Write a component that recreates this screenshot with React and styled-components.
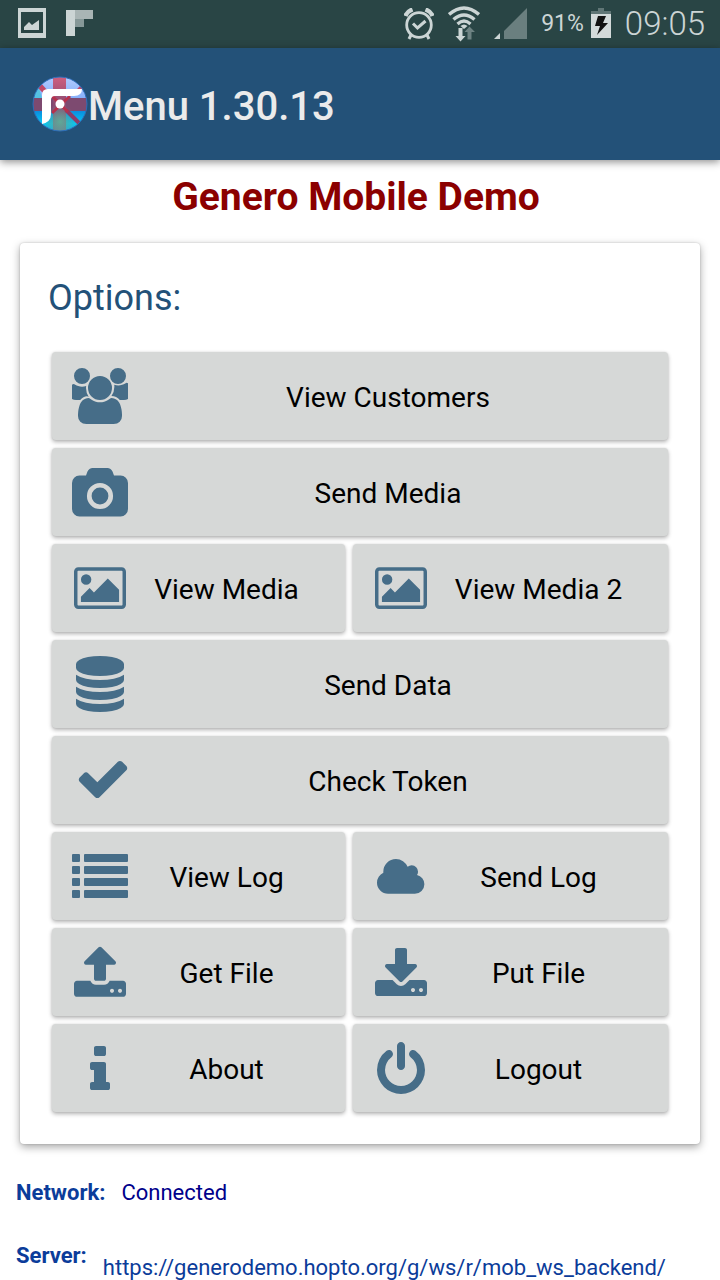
import React from "react";
import styled, { createGlobalStyle } from "styled-components";

const GlobalStyle = createGlobalStyle`
  *, *::before, *::after { box-sizing: border-box; }
  body {
    margin: 0;
    background: #fff;
    font-family: Roboto, "Liberation Sans", sans-serif;
  }
`;

const Screen = styled.div`
  display: flex;
  flex-direction: column;
`;

const StatusBar = styled.div`
  display: flex;
  align-items: center;
  justify-content: space-between;
  height: 48px;
  padding: 0 15px 0 16px;
  background: #294545;
  color: #ccd5d5;
`;

const StatusGroup = styled.div`
  display: flex;
  align-items: center;
  gap: ${(p) => p.$gap}px;
`;

const StatusText = styled.span`
  font-size: ${(p) => p.$size}px;
  line-height: 48px;
  font-weight: ${(p) => p.$weight || 400};
`;

const AppBar = styled.header`
  display: flex;
  align-items: center;
  height: 112px;
  padding: 0 32px;
  background: #235178;
  box-shadow: 0 2px 8px rgba(0, 0, 0, 0.45);
`;

const AppTitle = styled.span`
  color: #ebebeb;
  font-size: 40px;
  line-height: 48px;
  font-weight: 500;
  padding-top: 6px;
`;

const Main = styled.main`
  display: flex;
  flex-direction: column;
  padding: 12px 16px 0;
`;

const PageTitle = styled.h1`
  margin: 0 8px 20px 0;
  color: #8b0000;
  font-size: 39px;
  line-height: 51px;
  font-weight: 700;
  text-align: center;
`;

const Card = styled.section`
  margin: 0 4px;
  padding: 32px;
  border-radius: 4px;
  background: #fff;
  box-shadow: 0 3px 8px rgba(0, 0, 0, 0.35), 0 0 2px rgba(0, 0, 0, 0.2);
`;

const CardTitle = styled.h2`
  margin: 0 -4px 31px;
  color: #235178;
  font-size: 36px;
  line-height: 46px;
  font-weight: 400;
`;

const ButtonGrid = styled.div`
  display: grid;
  grid-template-columns: 293fr 315fr;
  gap: 8px;
`;

const MenuButton = styled.button`
  grid-column: ${(p) => (p.$wide ? "span 2" : "auto")};
  display: flex;
  align-items: center;
  height: 88px;
  padding: 0 20px;
  border: 0;
  border-radius: 4px;
  background: #d6d8d7;
  color: #000;
  font-family: inherit;
  font-size: 28px;
  line-height: 36px;
  cursor: pointer;
  box-shadow: 0 2px 4px rgba(0, 0, 0, 0.3), 0 0 2px rgba(0, 0, 0, 0.1);
`;

const ButtonLabel = styled.span`
  flex: 1;
  padding-top: 4px;
  text-align: center;
  white-space: nowrap;
`;

const ButtonIcon = styled.svg`
  flex: none;
  width: 56px;
  height: 56px;
  fill: #466d88;
`;

const Info = styled.div`
  display: flex;
  align-items: flex-start;
  gap: 16px;
  margin-top: 35px;
  font-size: 22px;
  line-height: 28px;
`;

const InfoLabel = styled.span`
  color: #0b3c9a;
  font-weight: 700;
`;

const InfoValue = styled.span`
  color: #00008b;
`;

const InfoLink = styled.a`
  color: #0b3c9a;
  text-decoration: none;
  padding-top: 12px;
`;

const ICONS = {
  users: {
    d: "M529 896q-162 5-265 128h-134q-82 0-138-40.5t-56-118.5q0-353 124-353 6 0 43.5 21t97.5 42.5 119 21.5q67 0 133-23-5 37-5 66 0 159 93 293zm1071 637q0 120-73 189.5t-194 69.5h-874q-121 0-194-69.5t-73-189.5q0-53 3.5-103.5t14-109 26.5-108.5 43-97.5 62-81 85.5-53.5 111.5-20q10 0 43 21.5t73 48 107 48 135 21.5 135-21.5 107-48 73-48 43-21.5q61 0 111.5 20t85.5 53.5 62 81 43 97.5 26.5 108.5 14 109 3.5 103.5zm-1024-1277q0 106-75 181t-181 75-181-75-75-181 75-181 181-75 181 75 75 181zm704 384q0 159-112.5 271.5t-271.5 112.5-271.5-112.5-112.5-271.5 112.5-271.5 271.5-112.5 271.5 112.5 112.5 271.5zm576 225q0 78-56 118.5t-138 40.5h-134q-103-123-265-128 93-134 93-293 0-29-5-66 66 23 133 23 59 0 119-21.5t97.5-42.5 43.5-21q124 0 124 353zm-128-609q0 106-75 181t-181 75-181-75-75-181 75-181 181-75 181 75 75 181z",
  },
  camera: {
    viewBox: "-64 -137 1920 1920",
    d: "M896 672q119 0 203.5 84.5t84.5 203.5-84.5 203.5-203.5 84.5-203.5-84.5-84.5-203.5 84.5-203.5 203.5-84.5zm704-416q106 0 181 75t75 181v896q0 106-75 181t-181 75h-1408q-106 0-181-75t-75-181v-896q0-106 75-181t181-75h224l51-136q19-49 69.5-84.5t103.5-35.5h512q53 0 103.5 35.5t69.5 84.5l51 136h224zm-704 1152q185 0 316.5-131.5t131.5-316.5-131.5-316.5-316.5-131.5-316.5 131.5-131.5 316.5 131.5 316.5 316.5 131.5z",
  },
  picture: {
    viewBox: "-138 -142 2068 2068",
    d: "M576 576q0 80-56 136t-136 56-136-56-56-136 56-136 136-56 136 56 56 136zm1024 384v448h-1408v-192l320-320 160 160 512-512zm96-704h-1600q-13 0-22.5 9.5t-9.5 22.5v1216q0 13 9.5 22.5t22.5 9.5h1600q13 0 22.5-9.5t9.5-22.5v-1216q0-13-9.5-22.5t-22.5-9.5zm160 32v1216q0 66-47 113t-113 47h-1600q-66 0-113-47t-47-113v-1216q0-66 47-113t113-47h1600q66 0 113 47t47 113z",
  },
  database: {
    d: "M896 768q237 0 443-43t325-127v170q0 69-103 128t-280 93.5-385 34.5-385-34.5-280-93.5-103-128v-170q119 84 325 127t443 43zm0 768q237 0 443-43t325-127v170q0 69-103 128t-280 93.5-385 34.5-385-34.5-280-93.5-103-128v-170q119 84 325 127t443 43zm0-384q237 0 443-43t325-127v170q0 69-103 128t-280 93.5-385 34.5-385-34.5-280-93.5-103-128v-170q119 84 325 127t443 43zm0-1152q208 0 385 34.5t280 93.5 103 128v128q0 69-103 128t-280 93.5-385 34.5-385-34.5-280-93.5-103-128v-128q0-69 103-128t280-93.5 385-34.5z",
  },
  check: {
    viewBox: "-96 48 1792 1792",
    d: "M1671 566q0 40-28 68l-724 724-136 136q-28 28-68 28t-68-28l-136-136-362-362q-28-28-28-68t28-68l136-136q28-28 68-28t68 28l294 295 656-657q28-28 68-28t68 28l136 136q28 28 28 68z",
  },
  list: {
    viewBox: "0 0 56 56",
    d: [6, 18, 30, 42]
      .map(
        (y) =>
          `M1 ${y}h6q1 0 1 1v6q0 1-1 1h-6q-1 0-1-1v-6q0-1 1-1zM13 ${y}h42q1 0 1 1v6q0 1-1 1h-42q-1 0-1-1v-6q0-1 1-1z`
      )
      .join(""),
  },
  cloud: {
    viewBox: "-98 -318 2270 2270",
    d: "M1984 1152q0 159-112.5 271.5t-271.5 112.5h-1088q-185 0-316.5-131.5t-131.5-316.5q0-132 71-241.5t187-163.5q-2-28-2-43 0-212 150-362t362-150q158 0 286.5 88t187.5 230q70-62 166-62 106 0 181 75t75 181q0 75-41 138 129 30 213 134.5t84 239.5z",
  },
  upload: {
    viewBox: "0 -24 1792 1792",
    d: "M1344 1472q0-26-19-45t-45-19-45 19-19 45 19 45 45 19 45-19 19-45zm256 0q0-26-19-45t-45-19-45 19-19 45 19 45 45 19 45-19 19-45zm128-224v320q0 40-28 68t-68 28h-1472q-40 0-68-28t-28-68v-320q0-40 28-68t68-28h427q21 56 70.5 92t110.5 36h256q61 0 110.5-36t70.5-92h427q40 0 68 28t28 68zm-325-648q-17 40-59 40h-256v448q0 26-19 45t-45 19h-256q-26 0-45-19t-19-45v-448h-256q-42 0-59-40-17-39 14-69l448-448q18-19 45-19t45 19l448 448q31 30 14 69z",
  },
  download: {
    viewBox: "0 -128 1792 1792",
    d: "M1344 1344q0-26-19-45t-45-19-45 19-19 45 19 45 45 19 45-19 19-45zm256 0q0-26-19-45t-45-19-45 19-19 45 19 45 45 19 45-19 19-45zm128-224v320q0 40-28 68t-68 28h-1472q-40 0-68-28t-28-68v-320q0-40 28-68t68-28h465l135 136q58 56 136 56t136-56l136-136h464q40 0 68 28t28 68zm-325-569q17 41-14 70l-448 448q-18 19-45 19t-45-19l-448-448q-31-29-14-70 17-39 59-39h256v-448q0-26 19-45t45-19h256q26 0 45 19t19 45v448h256q42 0 59 39z",
  },
  info: {
    viewBox: "0 -64 1792 1792",
    d: "M1216 1344v128q0 26-19 45t-45 19h-512q-26 0-45-19t-19-45v-128q0-26 19-45t45-19h64v-384h-64q-26 0-45-19t-19-45v-128q0-26 19-45t45-19h384q26 0 45 19t19 45v576h64q26 0 45 19t19 45zm-128-1152v192q0 26-19 45t-45 19h-256q-26 0-45-19t-19-45v-192q0-26 19-45t45-19h256q26 0 45 19t19 45z",
  },
  power: {
    viewBox: "0 -64 1792 1792",
    d: "M1664 896q0 156-61 298t-164 245-245 164-298 61-298-61-245-164-164-245-61-298q0-182 80.5-343t226.5-270q43-32 95.5-25t83.5 50q32 42 24.5 94.5t-49.5 84.5q-98 74-151.5 181t-53.5 228q0 104 40.5 198.5t109.5 163.5 163.5 109.5 198.5 40.5 198.5-40.5 163.5-109.5 109.5-163.5 40.5-198.5q0-121-53.5-228t-151.5-181q-42-32-49.5-84.5t24.5-94.5q31-43 84-50t95 25q146 109 226.5 270t80.5 343zm-640-768v640q0 52-38 90t-90 38-90-38-38-90v-640q0-52 38-90t90-38 90 38 38 90z",
  },
};

const MENU = [
  { label: "View Customers", icon: "users", wide: true },
  { label: "Send Media", icon: "camera", wide: true },
  { label: "View Media", icon: "picture" },
  { label: "View Media 2", icon: "picture" },
  { label: "Send Data", icon: "database", wide: true },
  { label: "Check Token", icon: "check", wide: true },
  { label: "View Log", icon: "list" },
  { label: "Send Log", icon: "cloud" },
  { label: "Get File", icon: "upload" },
  { label: "Put File", icon: "download" },
  { label: "About", icon: "info" },
  { label: "Logout", icon: "power" },
];

function ImageIcon() {
  return (
    <svg width="32" height="32" viewBox="0 0 32 32" fill="#ccd5d5" aria-hidden="true">
      <path fillRule="evenodd" d="M2 0H30V30H2ZM5 4V25H27V4Z" />
      <path d="M8 22V19L13 14L16 17L23 12V22Z" />
    </svg>
  );
}

function FlipboardIcon() {
  return (
    <svg width="28" height="32" viewBox="0 0 28 32" aria-hidden="true">
      <path fill="#ccd5d5" d="M0 2H9V28H0Z" />
      <path fill="#a9b5b5" d="M9 2H27V11H9Z" />
      <path fill="#869898" d="M9 11H18V19H9Z" />
    </svg>
  );
}

function AlarmIcon() {
  return (
    <svg width="30" height="32" viewBox="0 0 30 32" fill="none" stroke="#ccd5d5" aria-hidden="true">
      <circle cx="15" cy="17" r="12.300" strokeWidth="2.800" />
      <path d="M9 15.500L13.500 20L21.500 13" strokeWidth="3" />
      <path d="M1.500 8Q3 3.500 8.500 1.500M28.500 8Q27 3.500 21.500 1.500" strokeWidth="4.500" />
      <path d="M7 27L5 31M23 27L25 31" strokeWidth="3" />
    </svg>
  );
}

function WifiIcon() {
  return (
    <svg width="32" height="36" viewBox="1 0 32 36" fill="none" stroke="#ccd5d5" aria-hidden="true">
      <path d="M2 8.500Q17-4.500 32 8.500" strokeWidth="3.400" />
      <path d="M6.500 13.500Q17 4.500 27.500 13.500" strokeWidth="3.400" />
      <path d="M10.500 18Q17 12 23.500 18" strokeWidth="3.200" />
      <path d="M13.500 20Q17 17 20.500 20L17 23Z" fill="#ccd5d5" stroke="none" />
      <path d="M11.500 22H15.500V30H18.500L13.500 35.500L8.500 30H11.500Z" fill="#ccd5d5" stroke="none" />
      <path d="M20.500 33.500V26H17.500L22.500 20.500L28 26H24.500V33.500Z" fill="#6d8282" stroke="none" />
    </svg>
  );
}

function SignalIcon() {
  return (
    <svg width="33" height="32" viewBox="0 0 33 32" aria-hidden="true">
      <path fill="#6a7f7f" d="M10 31V23L33 0V31Z" />
      <path fill="#ccd5d5" d="M0 31L6 25V31Z" />
    </svg>
  );
}

function BatteryIcon() {
  return (
    <svg width="20" height="32" viewBox="0 0 20 32" aria-hidden="true">
      <path fill="#607676" d="M7 0H13V3H20V6H0V3H7Z" />
      <path fill="#d3dada" d="M0 6H20V30H0Z" />
      <path fill="#111" d="M7 8H15L12 15H17L6 27L9 18H4Z" />
    </svg>
  );
}

function LogoIcon() {
  return (
    <svg width="56" height="56" viewBox="0 0 56 56" aria-hidden="true">
      <defs>
        <linearGradient id="sky" x1="0" y1="0" x2="0" y2="1">
          <stop offset="0" stopColor="#b4ccff" />
          <stop offset="0.400" stopColor="#86b0fa" />
          <stop offset="0.500" stopColor="#3c6cae" />
          <stop offset="0.640" stopColor="#0a90e0" />
          <stop offset="0.850" stopColor="#04c8f4" />
          <stop offset="1" stopColor="#18a8e8" />
        </linearGradient>
        <linearGradient id="band" x1="0" y1="0" x2="0" y2="1">
          <stop offset="0" stopColor="#d06080" />
          <stop offset="0.500" stopColor="#8c4a70" />
          <stop offset="1" stopColor="#6c7c94" />
        </linearGradient>
        <radialGradient id="glow" cx="0.500" cy="0.820" r="0.300">
          <stop offset="0" stopColor="#5fa898" />
          <stop offset="1" stopColor="#5fa898" stopOpacity="0" />
        </radialGradient>
        <clipPath id="disc">
          <circle cx="28" cy="28" r="27" />
        </clipPath>
      </defs>
      <g clipPath="url(#disc)">
        <path fill="url(#sky)" d="M0 0H56V56H0Z" />
        <path fill="#3cc8d8" opacity="0.700" d="M0 22V10L7 12L10 22Z" />
        <path fill="#c04868" d="M5 11L9 7L16 15L12 18ZM44 14L50 8L53 11L46 17Z" />
        <path fill="#7d4a70" d="M0 22H56V35H0Z" />
        <path fill="url(#band)" d="M21 0H34V56H21Z" />
        <path fill="url(#glow)" d="M0 0H56V56H0Z" />
        <path stroke="#8c3c68" strokeWidth="4" d="M34 34L48 48" />
        <path stroke="#b8304c" strokeWidth="3" d="M20 20L36 36M38 20L20 37" />
      </g>
      <circle cx="28" cy="28" r="27" fill="none" stroke="#2c6cb8" strokeWidth="1" />
      <path fill="#fff" d="M10 48V19Q10 13 16 13H50Q50 20 42 20H23Q19 20 19 24V38Q19 46 10 48Z" />
      <circle cx="28" cy="28" r="4.500" fill="#fff" />
    </svg>
  );
}

export default function App() {
  return (
    <Screen>
      <GlobalStyle />
      <StatusBar>
        <StatusGroup $gap={18}>
          <ImageIcon />
          <FlipboardIcon />
        </StatusGroup>
        <StatusGroup $gap={14}>
          <AlarmIcon />
          <WifiIcon />
          <SignalIcon />
          <StatusGroup $gap={7}>
            <StatusText $size={23}>91%</StatusText>
            <BatteryIcon />
          </StatusGroup>
          <StatusText $size={33} $weight={300}>09:05</StatusText>
        </StatusGroup>
      </StatusBar>
      <AppBar>
        <LogoIcon />
        <AppTitle>Menu 1.30.13</AppTitle>
      </AppBar>
      <Main>
        <PageTitle>Genero Mobile Demo</PageTitle>
        <Card>
          <CardTitle>Options:</CardTitle>
          <ButtonGrid>
            {MENU.map(({ label, icon, wide }) => (
              <MenuButton key={label} type="button" $wide={wide}>
                <ButtonIcon viewBox={ICONS[icon].viewBox || "0 0 1792 1792"} aria-hidden="true">
                  <path fillRule="evenodd" d={ICONS[icon].d} />
                </ButtonIcon>
                <ButtonLabel>{label}</ButtonLabel>
              </MenuButton>
            ))}
          </ButtonGrid>
        </Card>
        <Info>
          <InfoLabel>Network:</InfoLabel>
          <InfoValue>Connected</InfoValue>
        </Info>
        <Info>
          <InfoLabel>Server:</InfoLabel>
          <InfoLink href="https://generodemo.hopto.org/g/ws/r/mob_ws_backend/">
            https://generodemo.hopto.org/g/ws/r/mob_ws_backend/
          </InfoLink>
        </Info>
      </Main>
    </Screen>
  );
}
